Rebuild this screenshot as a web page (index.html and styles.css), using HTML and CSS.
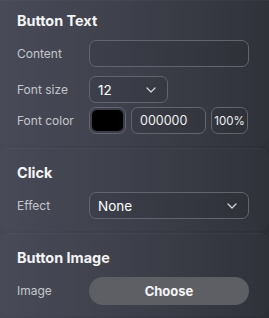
FILE: index.html
```html
<!DOCTYPE html>
<html>
<head>
<meta charset="utf-8">
<link rel="stylesheet" href="styles.css">
</head>
<body>
<div class="panel">
  <section class="card first">
    <h2 class="title">Button Text</h2>
    <div class="row r1">
      <span class="label">Content</span>
      <div class="field wide"></div>
    </div>
    <div class="row r2">
      <span class="label">Font size</span>
      <div class="field select small"><span class="val">12</span>
        <svg class="chev" width="10" height="6" viewBox="0 0 10 6"><path d="M1 1l4 4 4-4" fill="none" stroke="#d6d7da" stroke-width="1.2" stroke-linecap="round" stroke-linejoin="round"/></svg>
      </div>
    </div>
    <div class="row">
      <span class="label">Font color</span>
      <div class="colors">
        <div class="field swatch"><div class="swatch-fill"></div></div>
        <div class="field hex"><span class="hexval">000000</span></div>
        <div class="field pct"><span class="pctval">100%</span></div>
      </div>
    </div>
  </section>
  <section class="card">
    <h2 class="title">Click</h2>
    <div class="row">
      <span class="label">Effect</span>
      <div class="field select wide"><span class="val">None</span>
        <svg class="chev" width="10" height="6" viewBox="0 0 10 6"><path d="M1 1l4 4 4-4" fill="none" stroke="#d6d7da" stroke-width="1.2" stroke-linecap="round" stroke-linejoin="round"/></svg>
      </div>
    </div>
  </section>
  <section class="card">
    <h2 class="title">Button Image</h2>
    <div class="row">
      <span class="label">Image</span>
      <div class="choose">Choose</div>
    </div>
  </section>
</div>
</body>
</html>
```
FILE: styles.css
```css
html, body {
  margin: 0;
  padding: 0;
}
body {
  width: 269px;
  height: 318px;
  overflow: hidden;
  background: linear-gradient(90deg, #464955 0%, #3a3d48 50%, #2d2f37 100%);
  font-family: Inter, "Noto Sans", sans-serif;
  color: #fff;
}
.panel {
  display: flex;
  flex-direction: column;
  gap: 2px;
}
.card {
  padding: 16px 20px 12px 17px;
  border-radius: 10px;
  background: rgba(255, 255, 255, 0.015);
  box-shadow: inset 0 1px 0 rgba(255, 255, 255, 0.03);
}
.card.first {
  padding-top: 12px;
  border-top-left-radius: 0;
  border-top-right-radius: 0;
}
.title {
  margin: 0 0 10px 0;
  height: 18px;
  line-height: 18px;
  font-size: 14.4px;
  font-weight: 700;
  color: #f4f4f6;
}
.row {
  display: flex;
  align-items: center;
  height: 27px;
}
.r1 { margin-bottom: 9px; }
.r2 { margin-bottom: 4px; }
.label {
  width: 72px;
  flex: none;
  font-size: 12px;
  color: #c4c6cc;
}
.field {
  box-sizing: border-box;
  height: 27px;
  border: 1px solid #62656e;
  border-radius: 7px;
  background: rgba(0, 0, 0, 0.05);
  display: flex;
  align-items: center;
}
.wide { width: 160px; }
.small { width: 79px; }
.select {
  justify-content: space-between;
  padding: 0 11px 0 8px;
}
.val {
  font-size: 13.5px;
  color: #fff;
}
.chev { display: block; }
.colors {
  display: flex;
  gap: 5px;
}
.swatch {
  width: 37px;
  padding: 2px;
}
.swatch-fill {
  width: 100%;
  height: 100%;
  background: #000;
  border-radius: 5px;
}
.hex {
  width: 75px;
  padding-left: 8px;
}
.hexval {
  font-size: 12.5px;
  color: #f0f0f2;
}
.pct {
  width: 37px;
  justify-content: center;
}
.pctval {
  font-size: 11.5px;
  color: #f0f0f2;
}
.choose {
  width: 160px;
  height: 28px;
  border-radius: 14px;
  background: #5e5f64;
  display: flex;
  align-items: center;
  justify-content: center;
  font-size: 13px;
  font-weight: 700;
  color: #f4f4f6;
}
```
